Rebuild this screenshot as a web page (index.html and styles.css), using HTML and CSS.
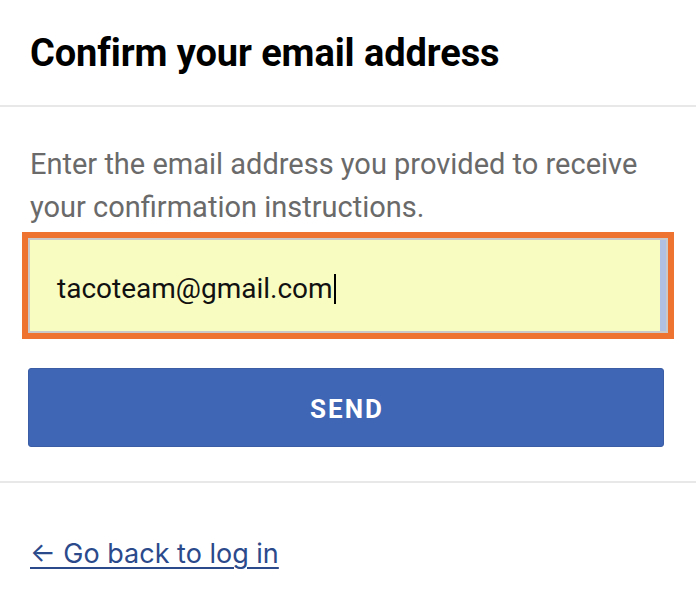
FILE: index.html
```html
<!DOCTYPE html>
<html>
<head>
<meta charset="utf-8">
<link rel="stylesheet" href="styles.css">
</head>
<body>
<div class="modal">
  <header class="head">
    <h1 class="title">Confirm your email address</h1>
  </header>
  <section class="content">
    <p class="lead">Enter the email address you provided to receive your confirmation instructions.</p>
    <div class="field"><span class="value">tacoteam@gmail.com</span><span class="caret"></span></div>
    <button class="send" type="button">SEND</button>
  </section>
  <footer class="foot">
    <a class="back" href="#">← Go back to log in</a>
  </footer>
</div>
</body>
</html>
```
FILE: styles.css
```css
html, body {
  margin: 0;
  padding: 0;
  background: #ffffff;
}
body {
  font-family: Roboto, "Liberation Sans", sans-serif;
  width: 696px;
  height: 610px;
  overflow: hidden;
}
.modal {
  display: flex;
  flex-direction: column;
}
.head {
  height: 105px;
  border-bottom: 2px solid #e8e8e8;
  padding: 0 30px;
  display: flex;
  align-items: center;
}
.title {
  margin: 0;
  font-size: 38px;
  font-weight: 700;
  color: #000;
  letter-spacing: -0.1px;
}
.content {
  padding: 0 32px 0 28px;
  height: 374px;
  border-bottom: 2px solid #e8e8e8;
}
.lead {
  margin: 36px 0 0 2px;
  font-size: 29px;
  line-height: 43px;
  color: #6a6a6a;
}
.field {
  margin-top: 9px;
  width: 640px;
  height: 95px;
  box-sizing: border-box;
  background: #f9fcc1;
  border: 2px solid #c9c9c9;
  outline: 6px solid #ee7330;
  box-shadow: inset -6px 0 0 #b0c0e2, 0 9px 0 -3px #b2c1e2;
  display: flex;
  align-items: center;
  padding: 6px 0 0 27px;
  font-size: 28px;
  color: #111;
}
.caret {
  display: inline-block;
  width: 2px;
  height: 30px;
  background: #000;
  margin-left: 1px;
}
.send {
  display: block;
  margin-top: 35px;
  width: 636px;
  height: 79px;
  border: 1px solid #3a5da6;
  border-radius: 3px;
  background: #3f66b4;
  color: #fff;
  font-family: Roboto, "Liberation Sans", sans-serif;
  font-size: 26px;
  font-weight: 700;
  letter-spacing: 2px;
  padding: 3px 0 0 2px;
}
.foot {
  padding: 54px 30px 0;
}
.back {
  font-family: Inter, "Liberation Sans", sans-serif;
  font-size: 27px;
  color: #2b4a8c;
  text-decoration: underline;
  text-underline-offset: 4px;
  text-decoration-thickness: 2px;
}
```
